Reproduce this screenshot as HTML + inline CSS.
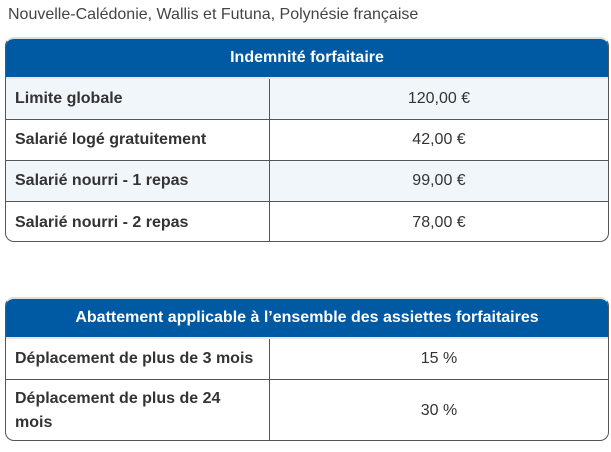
<!DOCTYPE html><html><head><style>
body{margin:0;background:#fff;font-family:"Liberation Sans",sans-serif;color:#333;width:611px;height:452px;overflow:hidden;position:relative}
.t{position:absolute;font-size:16px;color:#444;left:8px;top:6px}
.tb{position:absolute;left:5px;width:604px;border:1px solid #555;border-top:2px solid #ddd;border-radius:9px;overflow:hidden;box-sizing:border-box}
.h{background:#0059a3;color:#fff;font-weight:bold;font-size:16px;text-align:center;height:38px;line-height:38px;border-bottom:2px solid #e6e6e6}
.r{display:flex;border-top:1px solid #555;font-size:16px}
.a{width:264px;border-right:1px solid #555;padding-left:9px;font-weight:bold;display:flex;align-items:center;box-sizing:border-box}
.b{flex:1;display:flex;align-items:center;justify-content:center}
.l{background:#f1f6fa}
</style></head><body>
<div class="t">Nouvelle-Calédonie, Wallis et Futuna, Polynésie française</div>
<div class="tb" style="top:37px;height:205px">
<div class="h">Indemnité forfaitaire</div>
<div class="r l" style="height:40px;border-top:none"><div class="a">Limite globale</div><div class="b">120,00 €</div></div>
<div class="r" style="height:40px"><div class="a">Salarié logé gratuitement</div><div class="b">42,00 €</div></div>
<div class="r l" style="height:40px"><div class="a">Salarié nourri - 1 repas</div><div class="b">99,00 €</div></div>
<div class="r" style="height:41px"><div class="a">Salarié nourri - 2 repas</div><div class="b">78,00 €</div></div>
</div>
<div class="tb" style="top:297px;height:144px">
<div class="h">Abattement applicable à l’ensemble des assiettes forfaitaires</div>
<div class="r" style="height:40px;border-top:none"><div class="a">Déplacement de plus de 3 mois</div><div class="b">15 %</div></div>
<div class="r" style="height:62px"><div class="a" style="line-height:24px">Déplacement de plus de 24<br>mois</div><div class="b">30 %</div></div>
</div>
</body></html>
